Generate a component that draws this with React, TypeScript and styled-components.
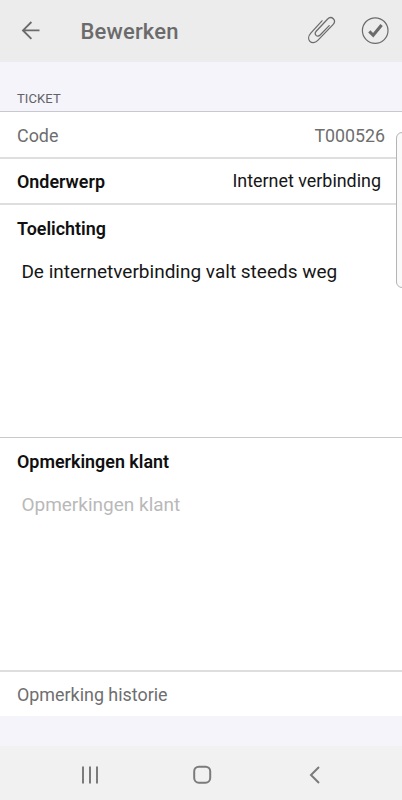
import React from "react";
import styled, { createGlobalStyle } from "styled-components";

const GlobalStyle = createGlobalStyle`
  * { box-sizing: border-box; }
  body {
    margin: 0;
    background: #f4f4fa;
    font-family: Roboto, "Noto Sans", sans-serif;
    -webkit-font-smoothing: antialiased;
  }
  button {
    border: 0;
    padding: 0;
    background: none;
    font: inherit;
    color: inherit;
  }
`;

const Screen = styled.div`
  position: relative;
  display: flex;
  flex-direction: column;
  width: 402px;
  height: 800px;
  overflow: hidden;
  background: #f4f4fa;
`;

const AppBar = styled.header`
  display: flex;
  align-items: center;
  flex: none;
  height: 62px;
  padding: 0 12px 0 16px;
  background: #ececec;
  color: #6b6b6b;
`;

const Title = styled.h1`
  flex: 1;
  margin: 0 0 0 34.5px;
  padding-top: 2px;
  font-size: 22px;
  line-height: 28px;
  font-weight: 500;
  letter-spacing: 0.15px;
`;

const IconButton = styled.button`
  display: flex;
  width: 30px;
  height: 30px;
  & + & { margin-left: 24px; }
  svg { display: block; }
`;

const SectionTitle = styled.h2`
  flex: none;
  height: 50px;
  margin: 0;
  padding: 29px 17px 0;
  border-bottom: 1px solid #c8c8d0;
  font-size: 13px;
  line-height: 16px;
  font-weight: 400;
  letter-spacing: 0.1px;
  color: #626266;
`;

const Row = styled.div<{ $height: number; $top?: number; $divider?: "thin" | "thick" | "none" }>`
  display: flex;
  flex: none;
  justify-content: space-between;
  height: ${(p) => p.$height}px;
  padding: ${(p) => p.$top ?? 12}px 17px 0;
  background: #fff;
  border-bottom: ${(p) =>
    p.$divider === "none" ? "0" : p.$divider === "thin" ? "1px solid #c9c9c9" : "2px solid #dedede"};
`;

const Field = styled(Row)`
  flex-direction: column;
  justify-content: flex-start;
`;

const Label = styled.span<{ $strong?: boolean }>`
  font-size: 17.9px;
  line-height: 24px;
  font-weight: ${(p) => (p.$strong ? 600 : 400)};
  color: ${(p) => (p.$strong ? "#101010" : "#6e6e6e")};
`;

const Value = styled.span`
  font-size: 17.8px;
  line-height: 24px;
  color: #6e6e6e;
`;

const Input = styled.span`
  margin: -1px 4px 0 0;
  font-size: 17.9px;
  line-height: 24px;
  color: #161616;
`;

const TextArea = styled.div<{ $placeholder?: boolean }>`
  margin: 19px 0 0 4.4px;
  font-size: 19px;
  line-height: 24px;
  color: ${(p) => (p.$placeholder ? "#b9b9b9" : "#161616")};
`;

const NavBar = styled.nav`
  display: flex;
  flex: none;
  align-items: center;
  justify-content: center;
  gap: 88px;
  height: 54px;
  margin-top: auto;
  padding: 3px 0 0 2px;
  background: #f1f1f1;
  color: #7b7b7b;
  svg { display: block; }
`;

const EdgeHandle = styled.div`
  position: absolute;
  top: 132px;
  left: 396px;
  width: 12px;
  height: 156px;
  border: 1px solid #b4b4b4;
  border-radius: 7px;
  background: rgba(250, 250, 250, 0.95);
`;

const BackIcon = () => (
  <svg width="30" height="30" viewBox="0 0 30 30" fill="none" stroke="currentColor" strokeWidth="1.9">
    <path d="M23.5 14.4H6.8M15.4 6L7 14.4L15.4 22.8" />
  </svg>
);

const ClipIcon = () => (
  <svg width="30" height="30" viewBox="0 0 30 30" fill="none" stroke="currentColor" strokeWidth="1.25" strokeLinecap="round">
    <path d="M16 4.8L5 16.8C-1 23.4 5.8 30.4 11.8 24.4L27 8.6C31 4.4 25.6 -1 21.4 3.2L10.4 15C7.4 18.4 11.2 22 14.4 18.8L23.2 9.6" />
  </svg>
);

const CheckIcon = () => (
  <svg width="30" height="30" viewBox="0 0 30 30" fill="none" stroke="currentColor">
    <circle cx="15.2" cy="14.6" r="12.8" strokeWidth="1.2" />
    <path d="M9.3 15.4L13.2 19.3L21.6 9" strokeWidth="3.1" />
  </svg>
);

export default function App() {
  return (
    <>
      <GlobalStyle />
      <Screen>
        <AppBar>
          <IconButton aria-label="Terug"><BackIcon /></IconButton>
          <Title>Bewerken</Title>
          <IconButton aria-label="Bijlage"><ClipIcon /></IconButton>
          <IconButton aria-label="Opslaan"><CheckIcon /></IconButton>
        </AppBar>
        <SectionTitle>TICKET</SectionTitle>
        <Row $height={47}>
          <Label>Code</Label>
          <Value>T000526</Value>
        </Row>
        <Row $height={46} $top={11}>
          <Label $strong>Onderwerp</Label>
          <Input>Internet verbinding</Input>
        </Row>
        <Field $height={233} $divider="thin">
          <Label $strong>Toelichting</Label>
          <TextArea>De internetverbinding valt steeds weg</TextArea>
        </Field>
        <Field $height={234}>
          <Label $strong>Opmerkingen klant</Label>
          <TextArea $placeholder>Opmerkingen klant</TextArea>
        </Field>
        <Row $height={44} $top={11} $divider="none">
          <Label>Opmerking historie</Label>
        </Row>
        <NavBar>
          <svg width="24" height="24" viewBox="0 0 24 24" fill="none" stroke="currentColor" strokeWidth="2">
            <path d="M5 3.5V20.5M12 3.5V20.5M19 3.5V20.5" />
          </svg>
          <svg width="24" height="24" viewBox="0 0 24 24" fill="none" stroke="currentColor" strokeWidth="2">
            <rect x="4.2" y="3.7" width="16" height="16" rx="4.6" />
          </svg>
          <svg width="24" height="24" viewBox="0 0 24 24" fill="none" stroke="currentColor" strokeWidth="2">
            <path d="M17 4L9 12L17 20" />
          </svg>
        </NavBar>
        <EdgeHandle />
      </Screen>
    </>
  );
}
